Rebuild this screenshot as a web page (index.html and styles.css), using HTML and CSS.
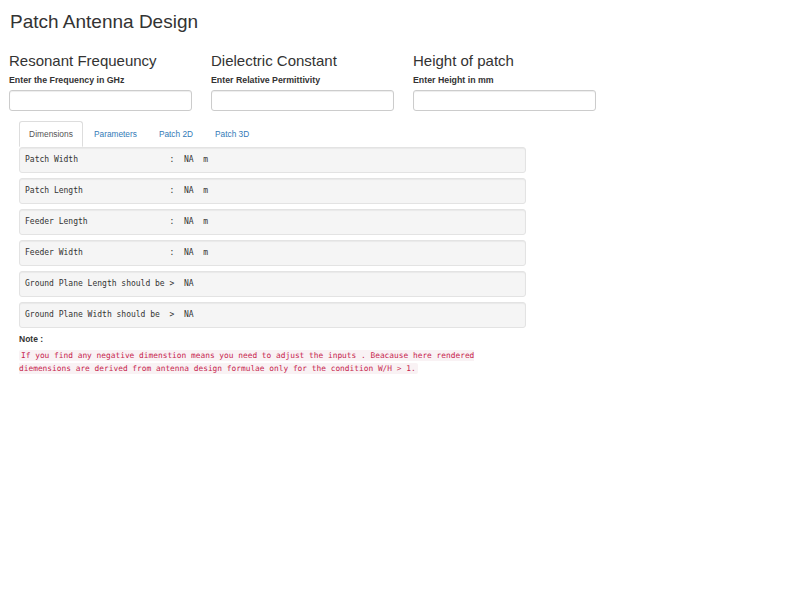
FILE: index.html
```html
<!DOCTYPE html>
<html>
<head>
<meta charset="utf-8">
<link rel="stylesheet" href="styles.css">
</head>
<body>
<div class="page">
  <h2 class="title">Patch Antenna Design</h2>
  <div class="inputs">
    <div class="col">
      <h3>Resonant Frequeuncy</h3>
      <label>Enter the Frequency in GHz</label>
      <input type="text" class="field">
    </div>
    <div class="col">
      <h3>Dielectric Constant</h3>
      <label>Enter Relative Permittivity</label>
      <input type="text" class="field">
    </div>
    <div class="col">
      <h3>Height of patch</h3>
      <label>Enter Height in mm</label>
      <input type="text" class="field">
    </div>
  </div>
  <div class="panel">
    <ul class="tabs">
      <li class="tab active">Dimensions</li>
      <li class="tab">Parameters</li>
      <li class="tab">Patch 2D</li>
      <li class="tab">Patch 3D</li>
    </ul>
    <div class="well">Patch Width                   :  NA  m</div>
    <div class="well">Patch Length                  :  NA  m</div>
    <div class="well">Feeder Length                 :  NA  m</div>
    <div class="well">Feeder Width                  :  NA  m</div>
    <div class="well">Ground Plane Length should be >  NA</div>
    <div class="well">Ground Plane Width should be  >  NA</div>
    <div class="note">Note :</div>
    <p class="codep"><code>If you find any negative dimenstion means you need to adjust the inputs . Beacause here rendered diemensions are derived from antenna design formulae only for the condition W/H &gt; 1.</code></p>
  </div>
</div>
</body>
</html>
```
FILE: styles.css
```css
* { box-sizing: border-box; }
html, body { margin: 0; padding: 0; background: #fff; }
body {
  font-family: "Liberation Sans", Arial, sans-serif;
  color: #333;
  font-size: 8px;
}
.page { width: 808px; }
.title {
  margin: 0;
  padding: 10px 0 0 10px;
  font-size: 19px;
  font-weight: normal;
  line-height: 24px;
  color: #333;
}
.inputs {
  display: grid;
  grid-template-columns: 202px 202px 202px;
  margin-top: 17px;
}
.col { padding-left: 9px; display: flex; flex-direction: column; }
.col h3 {
  margin: 0;
  font-size: 15px;
  font-weight: normal;
  line-height: 19px;
}
.col label {
  margin-top: 5px;
  font-size: 8.8px;
  font-weight: bold;
  line-height: 10px;
  color: #333;
}
.field {
  margin-top: 5px;
  width: 183px;
  height: 21px;
  border: 1px solid #ccc;
  border-radius: 3px;
  box-shadow: inset 0 1px 1px rgba(0,0,0,.075);
  background: #fff;
  padding: 0 6px;
  font-size: 8px;
}
.panel { margin: 10px 0 0 19px; width: 507px; }
.tabs {
  list-style: none;
  margin: 0;
  padding: 0;
  display: flex;
  height: 26px;
}
.tab {
  padding: 0 10px;
  line-height: 24px;
  height: 26px;
  color: #337ab7;
  font-size: 8.3px;
  border: 1px solid transparent;
  border-radius: 3px 3px 0 0;
}
.tab.active {
  color: #555;
  border-color: #ddd;
  border-bottom-color: transparent;
  background: #fff;
  padding: 0;
  width: 64px;
  text-align: center;
  font-size: 8.4px;
}
.well {
  height: 26px;
  margin-bottom: 5px;
  background: #f5f5f5;
  border: 1px solid #e3e3e3;
  border-radius: 3px;
  box-shadow: inset 0 1px 1px rgba(0,0,0,.05);
  padding: 0 5px;
  font-family: "DejaVu Sans Mono", monospace;
  font-size: 8px;
  line-height: 24px;
  white-space: pre;
  color: #333;
}
.note {
  margin-top: 6px;
  font-weight: bold;
  font-size: 8.5px;
  line-height: 10px;
}
.codep {
  margin: 5px 0 0 0;
  line-height: 13px;
  font-family: "DejaVu Sans Mono", monospace;
  font-size: 7.85px;
}
.codep code {
  font-family: "DejaVu Sans Mono", monospace;
  font-size: 7.85px;
  color: #c7254e;
  background: #f9f2f4;
  padding: 1px 2px;
  border-radius: 2px;
}
```
